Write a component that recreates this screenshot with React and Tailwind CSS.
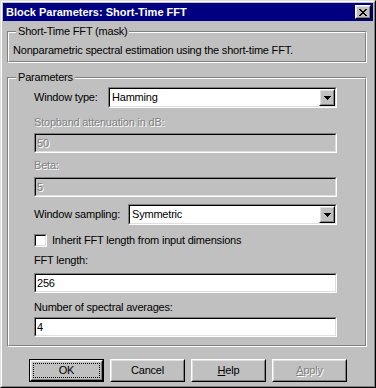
import React from "react";

const closeGlyph = [
  "xx....xx",
  ".xx..xx.",
  "..xxxx..",
  "...xx...",
  "..xxxx..",
  ".xx..xx.",
  "xx....xx",
];

function CloseIcon() {
  const rects = [];
  closeGlyph.forEach((row, y) =>
    row.split("").forEach((c, x) => {
      if (c === "x") rects.push(<rect key={`${x}-${y}`} x={x} y={y} width="1" height="1" fill="#000" />);
    })
  );
  return (
    <svg width="8" height="7" viewBox="0 0 8 7" shapeRendering="crispEdges">
      {rects}
    </svg>
  );
}

function Arrow() {
  return (
    <svg width="7" height="4" viewBox="0 0 7 4" shapeRendering="crispEdges">
      <rect x="0" y="0" width="7" height="1" fill="#000" />
      <rect x="1" y="1" width="5" height="1" fill="#000" />
      <rect x="2" y="2" width="3" height="1" fill="#000" />
      <rect x="3" y="3" width="1" height="1" fill="#000" />
    </svg>
  );
}

function Raised({ className = "", children }) {
  return (
    <div className={`border border-t-white border-l-white border-r-black border-b-black ${className}`}>
      <div className="w-full h-full border border-t-[#dfdfdf] border-l-[#dfdfdf] border-r-[#808080] border-b-[#808080] bg-[#c0c0c0] flex items-center justify-center">
        {children}
      </div>
    </div>
  );
}

function Sunken({ className = "", inner = "", children }) {
  return (
    <div className={`border border-t-[#808080] border-l-[#808080] border-r-white border-b-white ${className}`}>
      <div className={`w-full h-full border border-t-black border-l-black border-r-[#dfdfdf] border-b-[#dfdfdf] ${inner}`}>
        {children}
      </div>
    </div>
  );
}

function Edit({ value, disabled }) {
  return (
    <Sunken
      className="h-[20px] w-full"
      inner={`flex items-center pl-[1px] ${disabled ? "bg-[#c0c0c0] text-[#808080] [text-shadow:1px_1px_0_#fff]" : "bg-white text-black"}`}
    >
      <span className="leading-[13px]">{value}</span>
    </Sunken>
  );
}

function Select({ value, className = "" }) {
  return (
    <Sunken className={`h-[21px] ${className}`} inner="bg-white flex items-center">
      <span className="flex-1 pl-[2px] leading-[13px]">{value}</span>
      <Raised className="w-[16px] h-[17px]">
        <Arrow />
      </Raised>
    </Sunken>
  );
}

function Group({ label, className = "", innerClass = "", children }) {
  return (
    <div className={`relative border border-t-[#808080] border-l-[#808080] border-r-white border-b-white ${className}`}>
      <div className={`w-full h-full border border-t-white border-l-white border-r-[#808080] border-b-[#808080] ${innerClass}`}>
        {children}
      </div>
      <span className="absolute left-[8px] top-[-7px] bg-[#c0c0c0] px-[2px] leading-[13px]">{label}</span>
    </div>
  );
}

function Label({ children, disabled, className = "" }) {
  return (
    <div
      className={`h-[13px] leading-[13px] whitespace-nowrap ${disabled ? "text-[#808080] [text-shadow:1px_1px_0_#fff]" : "text-black"} ${className}`}
    >
      {children}
    </div>
  );
}

function Button({ children, def, disabled }) {
  const txt = disabled ? "text-[#808080] [text-shadow:1px_1px_0_#fff]" : "text-black";
  if (def) {
    return (
      <div className="w-[75px] h-[23px] border border-black">
        <div className="w-full h-full border border-t-white border-l-white border-r-black border-b-black">
          <div className="w-full h-full border border-t-[#dfdfdf] border-l-[#dfdfdf] border-r-[#808080] border-b-[#808080] bg-[#c0c0c0] p-[1px]">
            <div className={`w-full h-full border border-dotted border-black flex items-center justify-center ${txt}`}>
              {children}
            </div>
          </div>
        </div>
      </div>
    );
  }
  return (
    <Raised className="w-[75px] h-[23px]">
      <span className={txt}>{children}</span>
    </Raised>
  );
}

export default function App() {
  return (
    <div className="w-[376px] h-[388px] font-['Liberation_Sans',Arial,sans-serif] text-[11px] tracking-[-0.2px] text-black bg-[#c0c0c0] overflow-hidden">
      <div className="w-full h-full border border-t-[#dfdfdf] border-l-[#dfdfdf] border-r-black border-b-black">
        <div className="w-full h-full border border-t-white border-l-white border-r-[#808080] border-b-[#808080] p-[1px] flex flex-col">
          {/* title bar */}
          <div className="h-[18px] bg-[#000080] flex items-center justify-between pl-[3px] pr-[2px]">
            <span className="text-white font-bold text-[11px] tracking-normal leading-[13px]">Block Parameters: Short-Time FFT</span>
            <Raised className="w-[16px] h-[14px]">
              <CloseIcon />
            </Raised>
          </div>

          <div className="flex flex-col pl-[4px]">
            <Group label="Short-Time FFT (mask)" className="mt-[10px] w-[360px] h-[32px]" innerClass="pl-[4px] pt-[11px]">
              <div className="leading-[13px] whitespace-nowrap">Nonparametric spectral estimation using the short-time FFT.</div>
            </Group>

            <Group label="Parameters" className="mt-[14px] w-[360px] h-[270px]" innerClass="pl-[25px] pr-[28px] pt-[8px] flex flex-col">
              <div className="flex items-center h-[21px]">
                <Label className="w-[74px]">Window type:</Label>
                <Select value="Hamming" className="w-[229px]" />
              </div>
              <Label disabled className="mt-[8px]">Stopband attenuation in dB:</Label>
              <div className="mt-[4px]">
                <Edit value="50" disabled />
              </div>
              <Label disabled className="mt-[6px]">Beta:</Label>
              <div className="mt-[5px]">
                <Edit value="5" disabled />
              </div>
              <div className="flex items-center h-[21px] mt-[7px]">
                <Label className="w-[94px]">Window sampling:</Label>
                <Select value="Symmetric" className="w-[209px]" />
              </div>
              <div className="flex items-center mt-[9px] h-[13px]">
                <Sunken className="w-[13px] h-[13px]" inner="bg-white" />
                <span className="ml-[5px] leading-[13px] whitespace-nowrap">Inherit FFT length from input dimensions</span>
              </div>
              <Label className="mt-[7px]">FFT length:</Label>
              <div className="mt-[6px]">
                <Edit value="256" />
              </div>
              <Label className="mt-[8px]">Number of spectral averages:</Label>
              <div className="mt-[3px]">
                <Edit value="4" />
              </div>
            </Group>

            <div className="flex gap-[6px] mt-[12px] pl-[22px]">
              <Button def>OK</Button>
              <Button>Cancel</Button>
              <Button>
                <span className="underline">H</span>elp
              </Button>
              <Button disabled>
                <span className="underline">A</span>pply
              </Button>
            </div>
          </div>
        </div>
      </div>
    </div>
  );
}
